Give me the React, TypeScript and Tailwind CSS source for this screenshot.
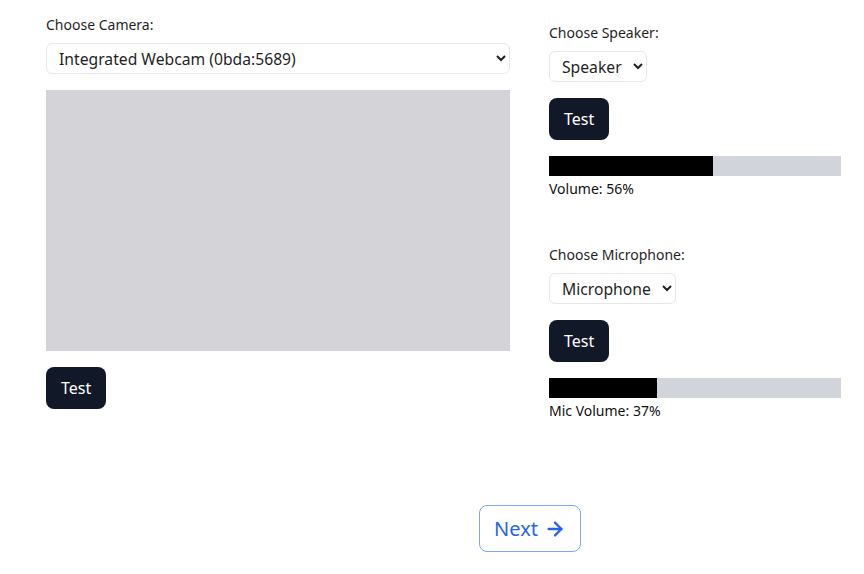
import React from 'react';
import { ArrowRight } from 'lucide-react';

const TestButton: React.FC = () => (
  <button className="h-[42px] px-[15px] rounded-lg bg-[#111827] text-white text-base">Test</button>
);

const Meter: React.FC<{ value: number; label: string }> = ({ value, label }) => (
  <div>
    <div className="h-5 w-full bg-[#d1d5db]">
      <div className="h-full bg-black" style={{ width: `${value}%` }} />
    </div>
    <p className="mt-[3px] text-sm text-[#111]">{label}: {value}%</p>
  </div>
);

const App: React.FC = () => {
  return (
    <div className="min-h-[574px] bg-white font-['Noto_Sans',sans-serif] text-[#1f1f1f]">
      <div className="flex pl-[46px] pt-[15px]">
        {/* camera */}
        <div className="w-[464px]">
          <label className="block text-sm leading-5">Choose Camera:</label>
          <select className="mt-2 block w-full h-[31px] px-2 text-[15.7px] rounded-md border border-[#e5e7eb] bg-white">
            <option>Integrated Webcam (0bda:5689)</option>
          </select>
          <div className="mt-4 h-[261px] w-full bg-[#d4d4d8]" />
          <div className="mt-4">
            <TestButton />
          </div>
        </div>

        {/* audio */}
        <div className="ml-[39px] w-[292px] pt-2">
          <label className="block text-sm leading-5">Choose Speaker:</label>
          <select className="mt-2 block h-[31px] px-2 text-[15.7px] rounded-md border border-[#e5e7eb] bg-white">
            <option>Speaker</option>
          </select>
          <div className="mt-4">
            <TestButton />
          </div>
          <div className="mt-4">
            <Meter value={56} label="Volume" />
          </div>

          <label className="mt-[46px] block text-sm leading-5">Choose Microphone:</label>
          <select className="mt-2 block h-[31px] px-2 text-[15.7px] rounded-md border border-[#e5e7eb] bg-white">
            <option>Microphone</option>
          </select>
          <div className="mt-4">
            <TestButton />
          </div>
          <div className="mt-4">
            <Meter value={37} label="Mic Volume" />
          </div>
        </div>
      </div>

      <div className="mt-[84px] pl-[479px]">
        <button className="flex items-center gap-1.5 h-[47px] w-[102px] justify-center rounded-lg border border-[#7fa8f5] text-[20px] text-[#2563eb]">
          Next
          <ArrowRight size={22} strokeWidth={2.5} />
        </button>
      </div>
    </div>
  );
};

export default App;
